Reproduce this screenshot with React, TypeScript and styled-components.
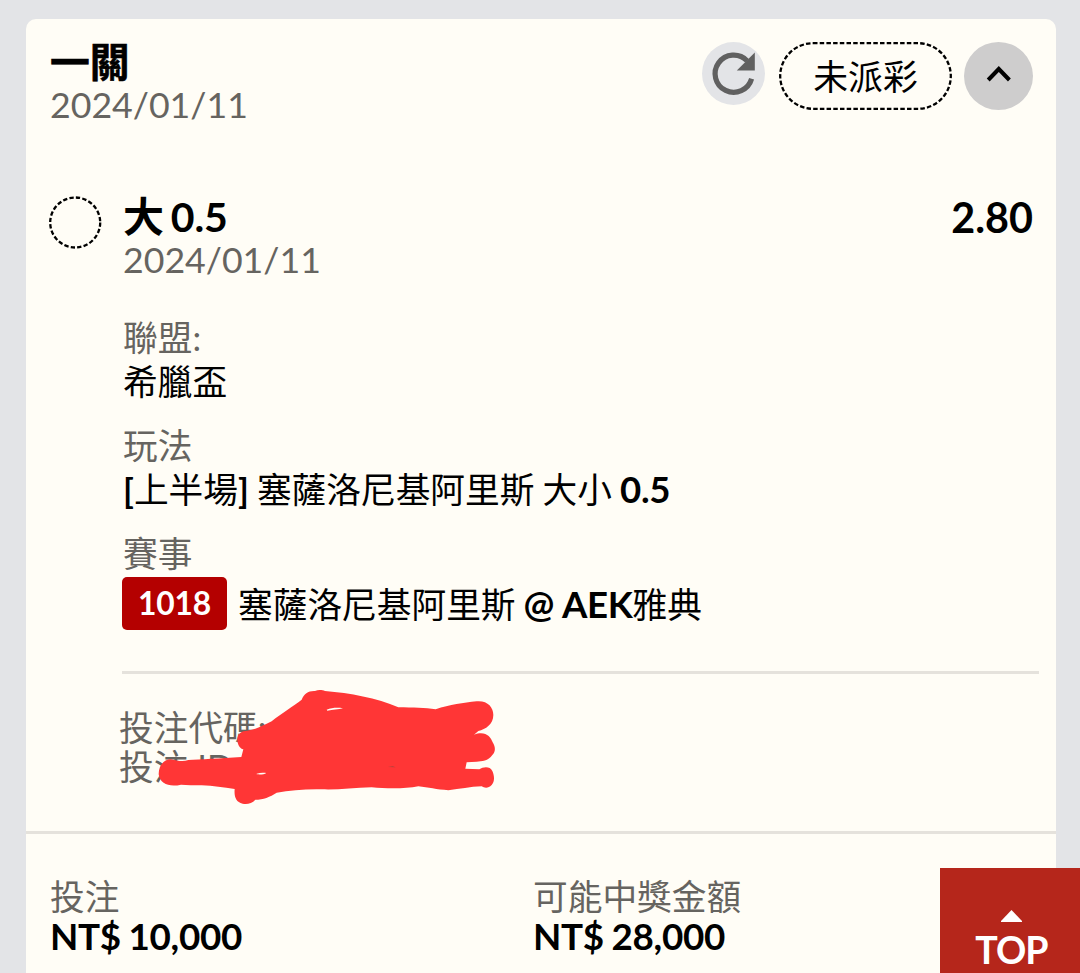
import { FC, ReactNode } from 'react';
import styled, { createGlobalStyle } from 'styled-components';

const colors = {
  page: '#e3e4e7',
  card: '#fffdf6',
  text: '#000',
  muted: '#666460',
  line: '#e5e2dc',
  badge: '#b40000',
  top: '#b5261b',
  marker: '#ff3636',
};

const GlobalStyle = createGlobalStyle`
  * {
    box-sizing: border-box;
  }
  body {
    margin: 0;
    background: ${colors.page};
    font-family: Lato, 'Noto Sans CJK TC', sans-serif;
    color: ${colors.text};
  }
`;

const Page = styled.main`
  height: 973px;
  padding: 19px 24px 0 26px;
  overflow: hidden;
`;

const Card = styled.article`
  height: 1000px;
  border-radius: 10px;
  background: ${colors.card};
`;

type LineProps = {
  $size?: number;
  $height?: number;
  $weight?: number;
  $muted?: boolean;
};

const Line = styled.div<LineProps>`
  font-size: ${({ $size = 34.7 }) => $size}px;
  line-height: ${({ $height = 44 }) => $height}px;
  font-weight: ${({ $weight = 400 }) => $weight};
  color: ${({ $muted }) => ($muted ? colors.muted : colors.text)};
  white-space: nowrap;
`;

const Title = styled(Line)`
  -webkit-text-stroke: 0.6px ${colors.text};
`;

const Pick = styled(Line)`
  letter-spacing: -0.1px;
  word-spacing: -3px;
`;

const Value = styled(Line)`
  word-spacing: -0.8px;
`;

const Amount = styled(Line)`
  letter-spacing: -0.3px;
  word-spacing: -1px;
`;

const Latin = styled.span`
  font-size: 36.6px;
  line-height: 1;
  font-weight: 700;
  letter-spacing: -0.3px;
`;

const Bracket = styled.span`
  font-weight: 700;
`;

const Header = styled.header`
  display: flex;
  justify-content: space-between;
  align-items: flex-start;
  height: 175px;
  padding: 23px 23px 0 24px;
`;

const Actions = styled.div`
  display: flex;
  align-items: flex-start;
`;

const RefreshButton = styled.button`
  display: flex;
  width: 63px;
  height: 63px;
  margin-right: 14px;
  padding: 0;
  border: 0;
  border-radius: 50%;
  background: #e3e4e7;
`;

const Status = styled.div`
  position: relative;
  display: flex;
  align-items: center;
  justify-content: center;
  width: 173px;
  height: 68px;
  margin-right: 12px;
  padding-top: 2px;
  font-size: 34.8px;
  line-height: 66px;
`;

const Outline = styled.svg`
  position: absolute;
  inset: 0;
`;

const ToggleButton = styled.button`
  display: flex;
  width: 69px;
  height: 68px;
  padding: 0;
  border: 0;
  border-radius: 50%;
  background: #cecdcd;
`;

const Bet = styled.section`
  display: grid;
  grid-template-columns: 73px 1fr;
  padding: 0 23px 0 23px;
`;

const Marker = styled.svg`
  margin-top: 2px;
`;

const BetBody = styled.div`
  padding-left: 1px;
`;

const BetTitle = styled.div`
  display: flex;
  justify-content: space-between;
`;

const Details = styled.dl`
  display: flex;
  flex-direction: column;
  gap: 20px;
  margin: 36px 0 0;
`;

const Match = styled.div`
  display: flex;
  align-items: flex-start;
  gap: 11px;
  margin: 1px 0 0 -1px;
`;

const Badge = styled.span`
  width: 105px;
  height: 53px;
  border-radius: 5px;
  background: ${colors.badge};
  color: #fff;
  font-size: 31.8px;
  font-weight: 700;
  line-height: 53px;
  letter-spacing: -0.2px;
  text-align: center;
`;

const Codes = styled.div`
  position: relative;
  height: 160px;
  margin: 39px -6px 0 -1px;
  padding: 34px 0 0;
  border-top: 3px solid ${colors.line};
`;

const CodeLines = styled.div`
  margin-left: -3px;
`;

const Scribble = styled.svg`
  position: absolute;
  top: 12.5px;
  left: 28px;
`;

const Totals = styled.footer`
  display: grid;
  grid-template-columns: 483px 1fr;
  padding: 43px 24px 0;
  border-top: 3px solid ${colors.line};
`;

const TopButton = styled.button`
  position: fixed;
  right: 0;
  bottom: 0;
  display: flex;
  flex-direction: column;
  align-items: center;
  justify-content: flex-start;
  width: 140px;
  height: 105px;
  padding: 42px 0 0 3px;
  border: 0;
  background: ${colors.top};
  color: #fff;
  font-family: inherit;
  font-size: 37.6px;
  font-weight: 700;
  letter-spacing: -1px;
  line-height: 46px;
`;

const TopArrow = styled.svg`
  flex: none;
  margin-bottom: 5px;
`;

const RefreshIcon: FC = () => (
  <svg width="63" height="63" viewBox="0 0 63 63">
    <path
      d="M49.6 36.8A18.6 18.6 0 1 1 45 18.7"
      fill="none"
      stroke="#606060"
      strokeWidth="5.2"
    />
    <path d="M52.8 10.5V28.5H34.8Z" fill="#606060" />
  </svg>
);

const ChevronIcon: FC = () => (
  <svg width="69" height="68" viewBox="0 0 69 68">
    <path
      d="M24.2 38L34.8 27L45.4 38"
      fill="none"
      stroke="#000"
      strokeWidth="4"
    />
  </svg>
);

const RedactedMark: FC = () => (
  <Scribble width="350" height="120" viewBox="150 80 1050 360">
    <path
      fill={colors.marker}
      d="M176 342C176 315 192 297 212 297C235 302 250 305 265 299C300 298 360 294 424 290L430 267C418 264 412 250 412 238C412 220 425 211 442 211C470 207 490 195 515 183C545 158 580 138 605 118C612 100 625 91 645 92C655 87 668 89 675 92C750 98 830 113 895 141C940 142 975 142 1007 147C1050 133 1090 127 1130 123C1162 120 1180 140 1180 164C1180 192 1157 207 1135 212L1122 223C1155 210 1172 228 1178 246C1187 260 1187 274 1177 284C1165 302 1145 303 1130 304L1100 306L1096 325L1138 327C1150 319 1170 317 1177 332C1184 348 1184 364 1175 374C1165 385 1153 383 1145 378C1110 379 1080 386 1045 390C1010 387 985 382 955 378C915 386 860 385 815 381C760 383 710 389 665 387C615 386 570 390 530 397C510 410 490 418 466 418C456 430 440 433 428 430C407 426 402 408 404 386C370 382 340 376 305 375C280 374 262 375 243 373C210 381 180 372 176 342Z"
    />
    <path
      fill={colors.card}
      d="M680 148C695 143 710 141 729 144C715 147 698 149 682 151ZM470 340C480 337 490 337 499 338C492 343 480 343 470 342Z"
    />
    <path fill="#a8443c" d="M864 320L878 318L887 321Z" />
  </Scribble>
);

type DetailProps = {
  label: string;
  children: ReactNode;
};

const Detail: FC<DetailProps> = ({ label, children }) => (
  <div>
    <Line as="dt" $muted>
      {label}
    </Line>
    {children}
  </div>
);

type TotalProps = {
  label: string;
  amount: string;
};

const Total: FC<TotalProps> = ({ label, amount }) => (
  <div>
    <Line $height={40} $muted>
      {label}
    </Line>
    <Amount $size={36.8} $height={39} $weight={700}>
      {amount}
    </Amount>
  </div>
);

const App: FC = () => (
  <>
    <GlobalStyle />
    <Page>
      <Card>
        <Header>
          <div>
            <Title $size={39.8} $height={40} $weight={700}>
              一關
            </Title>
            <Line $size={35.7} $height={46} $muted>
              2024/01/11
            </Line>
          </div>
          <Actions>
            <RefreshButton aria-label="refresh">
              <RefreshIcon />
            </RefreshButton>
            <Status>
              <Outline width="173" height="68">
                <rect
                  x="1.2"
                  y="1.2"
                  width="170.6"
                  height="65.6"
                  rx="32.8"
                  fill="none"
                  stroke="#000"
                  strokeWidth="2.3"
                  strokeDasharray="4.5 2.2"
                />
              </Outline>
              未派彩
            </Status>
            <ToggleButton aria-label="collapse">
              <ChevronIcon />
            </ToggleButton>
          </Actions>
        </Header>

        <Bet>
          <Marker width="53" height="53">
            <circle
              cx="26.2"
              cy="26.5"
              r="25"
              fill="none"
              stroke="#000"
              strokeWidth="2.3"
              strokeDasharray="4.34 2.2"
            />
          </Marker>
          <BetBody>
            <BetTitle>
              <Pick $size={41} $height={45} $weight={700}>
                大 0.5
              </Pick>
              <Line $size={41.3} $height={46} $weight={700}>
                2.80
              </Line>
            </BetTitle>
            <Line $size={35.7} $height={40} $muted>
              2024/01/11
            </Line>
            <Details>
              <Detail label="聯盟:">
                <Value>希臘盃</Value>
              </Detail>
              <Detail label="玩法">
                <Value>
                  <Bracket>[</Bracket>上半場<Bracket>]</Bracket>{' '}
                  塞薩洛尼基阿里斯 大小 <Latin>0.5</Latin>
                </Value>
              </Detail>
              <Detail label="賽事">
                <Match>
                  <Badge>1018</Badge>
                  <Value $height={55}>
                    塞薩洛尼基阿里斯 <Latin>@ AEK</Latin>雅典
                  </Value>
                </Match>
              </Detail>
            </Details>
            <Codes>
              <CodeLines>
                <Line $height={39} $muted>
                  投注代碼:
                </Line>
                <Line $height={39} $muted>
                  投注 ID:
                </Line>
              </CodeLines>
              <RedactedMark />
            </Codes>
          </BetBody>
        </Bet>

        <Totals>
          <Total label="投注" amount="NT$ 10,000" />
          <Total label="可能中獎金額" amount="NT$ 28,000" />
        </Totals>
      </Card>
    </Page>
    <TopButton>
      <TopArrow width="21" height="12" viewBox="0 0 21 12">
        <path d="M10.5 0L21 11V12H0V11Z" fill="#fff" />
      </TopArrow>
      TOP
    </TopButton>
  </>
);

export default App;
